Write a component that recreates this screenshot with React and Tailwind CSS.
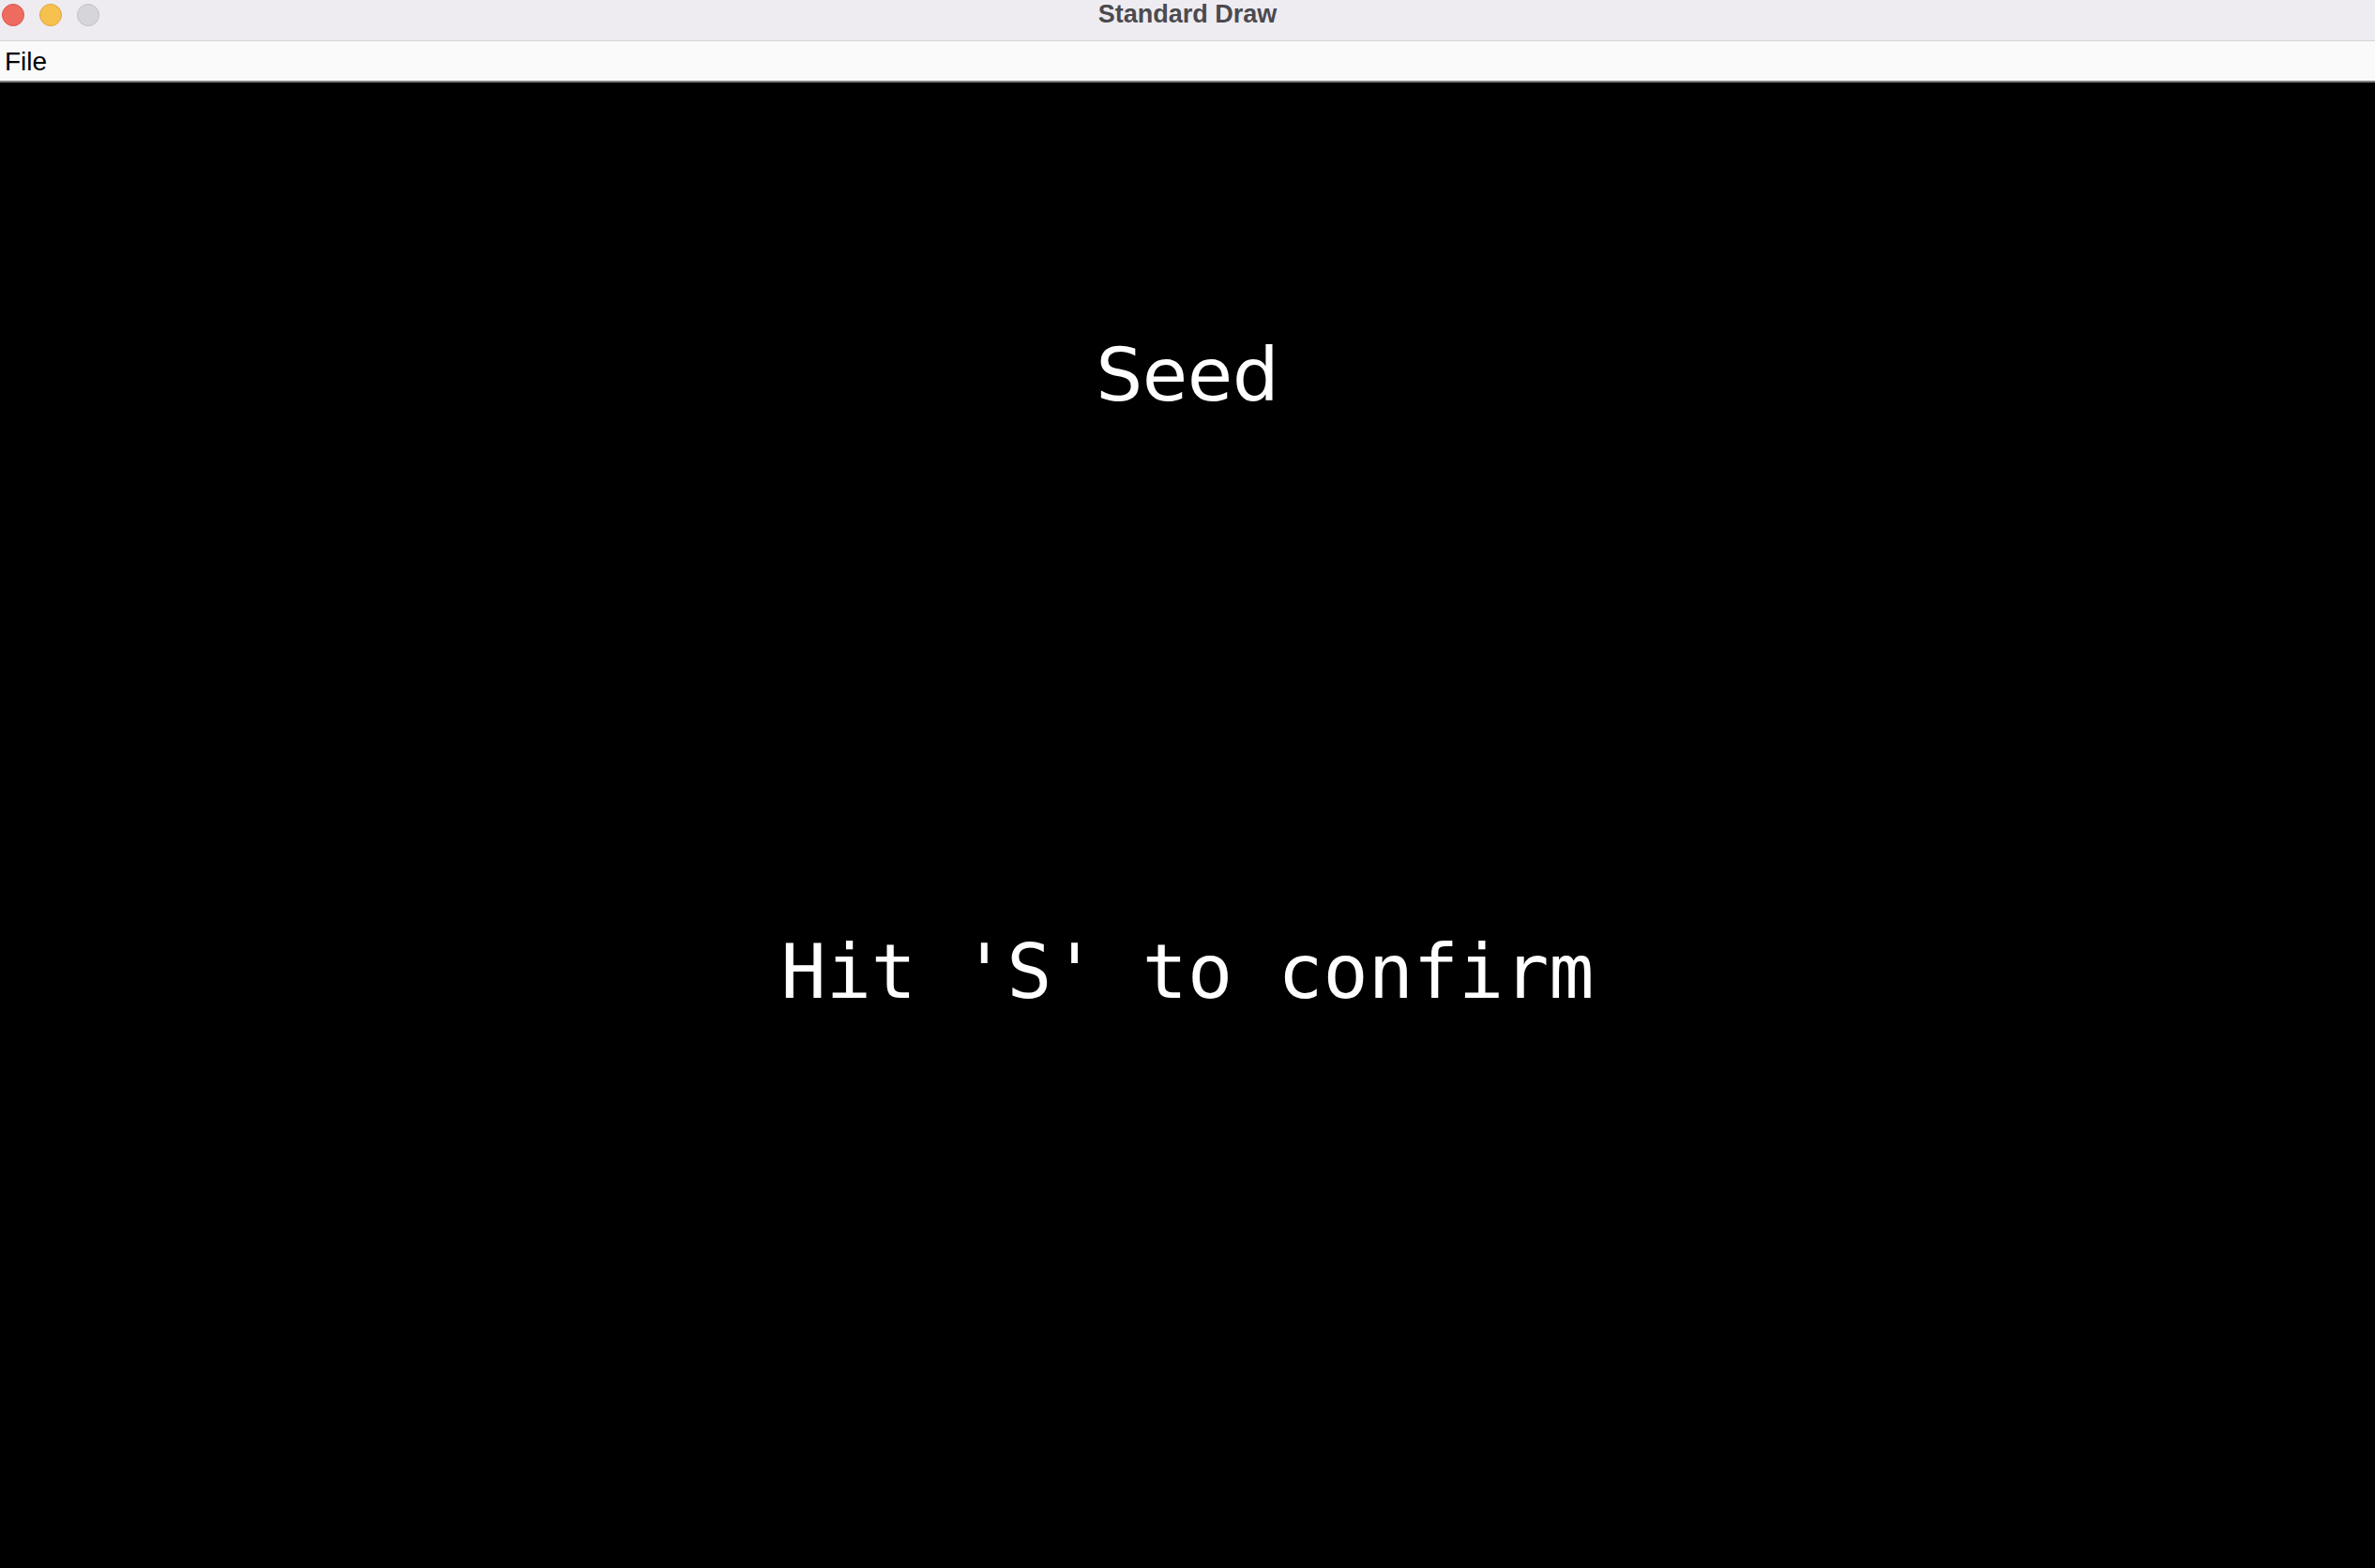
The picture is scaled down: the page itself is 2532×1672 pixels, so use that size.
import React from "react";

export default function App() {
  return (
    <div className="w-[2532px] h-[1672px] flex flex-col overflow-hidden bg-black">
      {/* Title bar */}
      <div className="relative h-[44px] shrink-0 bg-[#eeecf1] border-b border-[#d6d5d9] flex items-center justify-center">
        <div className="absolute left-[2px] top-[4px] flex gap-[16px]">
          <span className="w-[24px] h-[24px] rounded-full bg-[#ee6b60] border border-[#d9574c]" />
          <span className="w-[24px] h-[24px] rounded-full bg-[#f6c04f] border border-[#dfa73c]" />
          <span className="w-[24px] h-[24px] rounded-full bg-[#d6d5d9] border border-[#c2c1c5]" />
        </div>
        <span className="font-['Liberation_Sans',Arial,sans-serif] font-bold text-[27px] leading-none text-[#4b4a4f] -mt-[12px]">
          Standard Draw
        </span>
      </div>

      {/* Menu bar */}
      <div className="h-[44px] shrink-0 bg-[#fafafa] border-b-2 border-[#808080] flex items-center px-[5px]">
        <span className="font-['Liberation_Sans',Arial,sans-serif] text-[28px] leading-none text-black mt-[2px]">
          File
        </span>
      </div>

      {/* Canvas */}
      <div className="flex-1 bg-black flex flex-col items-center text-white">
        <div className="mt-[273px] font-['DejaVu_Sans',sans-serif] text-[78px] leading-none">
          Seed
        </div>
        <div className="mt-[558px] font-['DejaVu_Sans_Mono',monospace] text-[80px] leading-none whitespace-pre">
          Hit 'S' to confirm
        </div>
      </div>
    </div>
  );
}
